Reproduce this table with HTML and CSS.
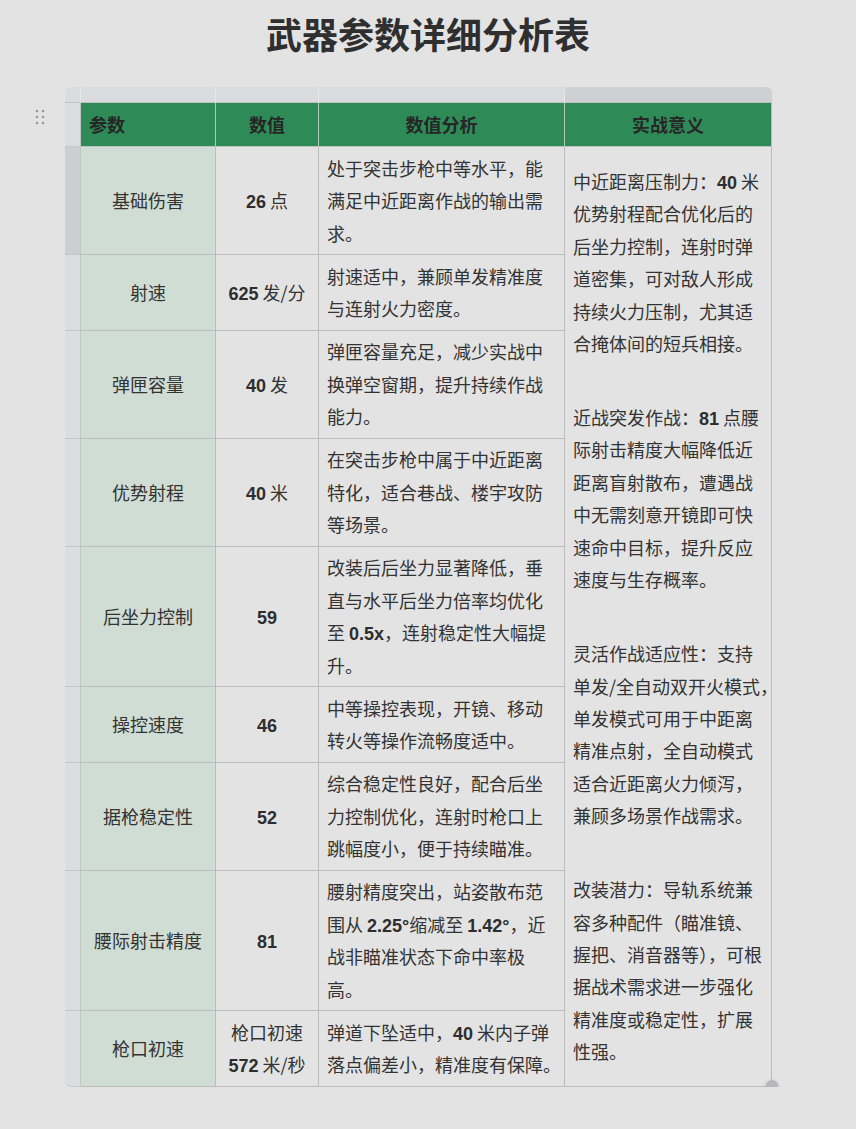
FILE: index.html
```html
<!DOCTYPE html>
<html lang="zh-CN">
<head>
<meta charset="utf-8">
<title>武器参数详细分析表</title>
<link rel="stylesheet" href="styles.css">
</head>
<body>
<h1 class="title">武器参数详细分析表</h1>
<div class="sheet">
  <span class="drag">
    <svg width="10" height="16" viewBox="0 0 10 16" aria-hidden="true">
      <circle cx="2" cy="2" r="1.3"/><circle cx="8" cy="2" r="1.3"/>
      <circle cx="2" cy="8" r="1.3"/><circle cx="8" cy="8" r="1.3"/>
      <circle cx="2" cy="14" r="1.3"/><circle cx="8" cy="14" r="1.3"/>
    </svg>
  </span>
  <table class="grid">
    <colgroup>
      <col class="c0"><col class="c1"><col class="c2"><col class="c3"><col class="c4">
    </colgroup>
    <tr class="bar">
      <td class="corner"></td><td></td><td></td><td></td><td class="sel last"></td>
    </tr>
    <tr class="head">
      <td class="rh"></td>
      <th class="left">参数</th>
      <th>数值</th>
      <th>数值分析</th>
      <th class="endcol">实战意义</th>
    </tr>
    <tr>
      <td class="rh sel"></td>
      <td class="name">基础伤害</td>
      <td class="val"><b class="num">26</b> 点</td>
      <td class="desc">处于突击步枪中等水平，能满足中近距离作战的输出需求。</td>
      <td class="sig" rowspan="9">
        <p>中近距离压制力：<b class="num">40</b> 米优势射程配合优化后的后坐力控制，连射时弹道密集，可对敌人形成持续火力压制，尤其适合掩体间的短兵相接。</p>
        <p>近战突发作战：<b class="num">81</b> 点腰际射击精度大幅降低近距离盲射散布，遭遇战中无需刻意开镜即可快速命中目标，提升反应速度与生存概率。</p>
        <p>灵活作战适应性：支持单发/全自动双开火模式<span class="hang">，</span>单发模式可用于中距离精准点射，全自动模式适合近距离火力倾泻，兼顾多场景作战需求。</p>
        <p>改装潜力：导轨系统兼容多种配件（瞄准镜、握把、消音器等），可根据战术需求进一步强化精准度或稳定性，扩展性强。</p>
      </td>
    </tr>
    <tr>
      <td class="rh"></td>
      <td class="name">射速</td>
      <td class="val"><b class="num">625</b> 发/分</td>
      <td class="desc">射速适中，兼顾单发精准度与连射火力密度。</td>
    </tr>
    <tr>
      <td class="rh"></td>
      <td class="name">弹匣容量</td>
      <td class="val"><b class="num">40</b> 发</td>
      <td class="desc">弹匣容量充足，减少实战中换弹空窗期，提升持续作战能力。</td>
    </tr>
    <tr>
      <td class="rh"></td>
      <td class="name">优势射程</td>
      <td class="val"><b class="num">40</b> 米</td>
      <td class="desc">在突击步枪中属于中近距离特化，适合巷战、楼宇攻防等场景。</td>
    </tr>
    <tr>
      <td class="rh"></td>
      <td class="name">后坐力控制</td>
      <td class="val"><b class="num">59</b></td>
      <td class="desc">改装后后坐力显著降低，垂直与水平后坐力倍率均优化至 <b class="num">0.5x</b>，连射稳定性大幅提升。</td>
    </tr>
    <tr>
      <td class="rh"></td>
      <td class="name">操控速度</td>
      <td class="val"><b class="num">46</b></td>
      <td class="desc">中等操控表现，开镜、移动转火等操作流畅度适中。</td>
    </tr>
    <tr>
      <td class="rh"></td>
      <td class="name">据枪稳定性</td>
      <td class="val"><b class="num">52</b></td>
      <td class="desc">综合稳定性良好，配合后坐力控制优化，连射时枪口上跳幅度小，便于持续瞄准。</td>
    </tr>
    <tr>
      <td class="rh"></td>
      <td class="name">腰际射击精度</td>
      <td class="val"><b class="num">81</b></td>
      <td class="desc">腰射精度突出，站姿散布范围从 <b class="num">2.25°</b>缩减至 <b class="num">1.42°</b>，近战非瞄准状态下命中率极高。</td>
    </tr>
    <tr class="lastrow">
      <td class="rh bl"></td>
      <td class="name">枪口初速</td>
      <td class="val">枪口初速 <b class="num">572</b> 米/秒</td>
      <td class="desc">弹道下坠适中，<b class="num">40</b> 米内子弹落点偏差小，精准度有保障<span class="hang">。</span></td>
    </tr>
  </table>
  <span class="resize"></span>
</div>
</body>
</html>
```

FILE: styles.css
```css
html, body {
  margin: 0;
  padding: 0;
  background: #e3e3e3;
}

body {
  font-family: "Noto Sans CJK SC", "Noto Sans", sans-serif;
  color: #333;
}

.title {
  margin: 0;
  padding-top: 12px;
  font-size: 36px;
  line-height: 43px;
  font-weight: 700;
  text-align: center;
  color: #2f2f2f;
}

.sheet {
  position: relative;
  width: 707px;
  margin: 32px 0 0 65px;
}

.drag {
  position: absolute;
  left: -30px;
  top: 22px;
  width: 10px;
  height: 16px;
  fill: #9a9a9a;
}

.drag svg {
  display: block;
}

.resize {
  position: absolute;
  right: -6px;
  bottom: -5px;
  width: 12px;
  height: 12px;
  border-radius: 50%;
  background: #b6b7ba;
  box-shadow: 0 1px 4px rgba(0, 0, 0, 0.18);
}

.grid {
  table-layout: fixed;
  border-collapse: separate;
  border-spacing: 0;
  width: 707px;
  font-size: 18px;
  line-height: 32.4px;
}

.c0 { width: 16px; }
.c1 { width: 135px; }
.c2 { width: 103px; }
.c3 { width: 246px; }
.c4 { width: 207px; }

.grid td,
.grid th {
  box-sizing: border-box;
  padding: 4.9px 8px;
  border-right: 1px solid #bcbcbc;
  border-bottom: 1px solid #bcbcbc;
  vertical-align: middle;
  background: #e3e3e3;
  text-align: left;
}

/* column handle bar */
.grid .bar td {
  height: 16px;
  padding: 0;
  background: #dadbde;
  border-right: 1px solid #e6e7e9;
  border-bottom: 1px solid #bfc0c2;
}

.grid .bar td.sel {
  background: #cfd0d3;
}

.grid .bar td.corner {
  border-top-left-radius: 6px;
}

.grid .bar td.last {
  border-top-right-radius: 6px;
  border-right: 0;
}

/* row handle column */
.grid td.rh {
  padding: 0;
  background: #dcdde0;
  border-right: 1px solid #c4c5c7;
  border-bottom: 1px solid #c6c7c9;
}

.grid td.rh.sel {
  background: #cdced1;
}

.grid td.rh.bl {
  border-bottom-left-radius: 6px;
}

/* header */
.grid .head th {
  height: 44px;
  padding: 0 8px;
  background: #2e8b57;
  color: #262626;
  font-weight: 700;
  font-size: 18px;
  text-align: center;
  border-right: 1px solid #b3c6ba;
  border-bottom: 1px solid #c0c4c1;
}

.grid .head th.left {
  text-align: left;
}

.grid .head th.endcol {
  border-right: 1px solid #bcbcbc;
}

/* body cells */
.grid td.name {
  background: #d0ddd4;
  text-align: center;
  padding: 4.9px 6px;
}

.grid td.val {
  text-align: center;
  padding: 4.9px 6px;
}

.grid td.desc {
  padding: 4.9px 8px;
}

.grid td.sig {
  padding: 4.9px 8px;
}

.sig p {
  margin: 0;
}

.sig p + p {
  margin-top: 41.6px;
}

/* emulated hanging punctuation at line end */
.hang {
  display: inline-block;
  width: 18px;
  margin-right: -18px;
}

.num {
  font-family: "Liberation Sans", Arial, sans-serif;
  font-weight: 700;
  line-height: 1;
  color: #2e2e2e;
}
```
